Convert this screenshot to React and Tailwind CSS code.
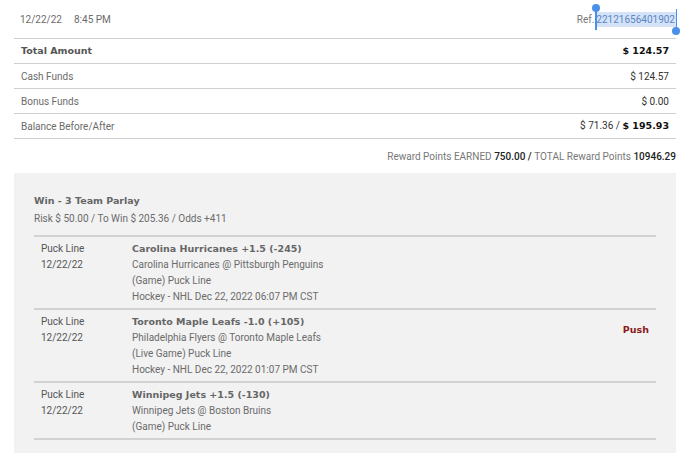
import React from 'react';

const legs = [
  {
    type: 'Puck Line',
    date: '12/22/22',
    title: 'Carolina Hurricanes +1.5 (-245)',
    lines: ['Carolina Hurricanes @ Pittsburgh Penguins', '(Game) Puck Line', 'Hockey - NHL Dec 22, 2022 06:07 PM CST'],
  },
  {
    type: 'Puck Line',
    date: '12/22/22',
    title: 'Toronto Maple Leafs -1.0 (+105)',
    lines: ['Philadelphia Flyers @ Toronto Maple Leafs', '(Live Game) Puck Line', 'Hockey - NHL Dec 22, 2022 01:07 PM CST'],
    status: 'Push',
  },
  {
    type: 'Puck Line',
    date: '12/22/22',
    title: 'Winnipeg Jets +1.5 (-130)',
    lines: ['Winnipeg Jets @ Boston Bruins', '(Game) Puck Line'],
  },
];

const bold = "font-['DejaVu_Sans',sans-serif] font-bold text-[9.5px]";

const Row = ({ label, children, strong }) => (
  <div className="h-[25px] flex items-center justify-between px-[7px] border-b-[1.5px] border-[#cfcfcf]">
    <span className={strong ? `${bold} text-[#555]` : 'text-[#6b6b6b]'}>{label}</span>
    <span>{children}</span>
  </div>
);

export default function App() {
  return (
    <div className="w-[690px] h-[458px] bg-white px-[14px] font-['Roboto',sans-serif] text-[10px] text-[#6b6b6b] overflow-hidden">
      {/* header */}
      <div className="h-[38px] flex items-center justify-between pl-[6px]">
        <div className="flex gap-[12px]">
          <span>12/22/22</span>
          <span>8:45 PM</span>
        </div>
        <div className="relative flex items-center">
          <span className="mr-[2px] text-[#777]">Ref.</span>
          <span className="relative bg-[#d4e3f8] text-[#5b86c4] pr-[1px]">
            22121656401902
            <span className="absolute left-[-1px] top-[-3px] bottom-[-3px] w-[1.5px] bg-[#4a90e8]" />
            <span className="absolute left-[-4px] top-[-8px] w-[8px] h-[8px] rounded-full bg-[#4a90e8]" />
            <span className="absolute right-[-1px] top-[-3px] bottom-[-3px] w-[1.5px] bg-[#4a90e8]" />
            <span className="absolute right-[-4px] bottom-[-8px] w-[8px] h-[8px] rounded-full bg-[#4a90e8]" />
          </span>
        </div>
      </div>

      {/* totals */}
      <div className="border-t-[1.5px] border-[#cfcfcf]">
        <Row label="Total Amount" strong>
          <span className={`${bold} text-[#111]`}>$ 124.57</span>
        </Row>
        <Row label="Cash Funds"><span className="text-[#333]">$ 124.57</span></Row>
        <Row label="Bonus Funds"><span className="text-[#333]">$ 0.00</span></Row>
        <Row label="Balance Before/After">
          <span className="text-[#333]">$ 71.36 / </span>
          <span className={`${bold} text-[#111]`}>$ 195.93</span>
        </Row>
      </div>

      <div className="h-[34px] flex items-center justify-end text-[#777]">
        <span>Reward Points EARNED&nbsp;</span>
        <span className="font-medium text-[#222]">750.00 /&nbsp;</span>
        <span>TOTAL Reward Points&nbsp;</span>
        <span className="font-medium text-[#222]">10946.29</span>
      </div>

      {/* parlay */}
      <div className="bg-[#f2f2f2] h-[280px] px-[20px] pt-[20px]">
        <div className={`${bold} text-[#666] leading-[16px]`}>Win - 3 Team Parlay</div>
        <div className="leading-[20px] mb-[6px]">Risk $ 50.00 / To Win $ 205.36 / Odds +411</div>
        <div className="border-t-[2px] border-[#d2d2d2]">
          {legs.map((leg, i) => (
            <div key={i} className="flex pl-[7px] pr-[7px] pt-[4px] pb-[3px] leading-[16px] border-b-[2px] border-[#d2d2d2]">
              <div className="w-[91px] text-[#555]">
                <div>{leg.type}</div>
                <div>{leg.date}</div>
              </div>
              <div className="flex-1">
                <div className={`${bold} text-[#666]`}>{leg.title}</div>
                {leg.lines.map((l, j) => <div key={j}>{l}</div>)}
              </div>
              {leg.status && (
                <div className={`${bold} text-[#8b1a1a] pt-[8px]`}>{leg.status}</div>
              )}
            </div>
          ))}
        </div>
      </div>
    </div>
  );
}
